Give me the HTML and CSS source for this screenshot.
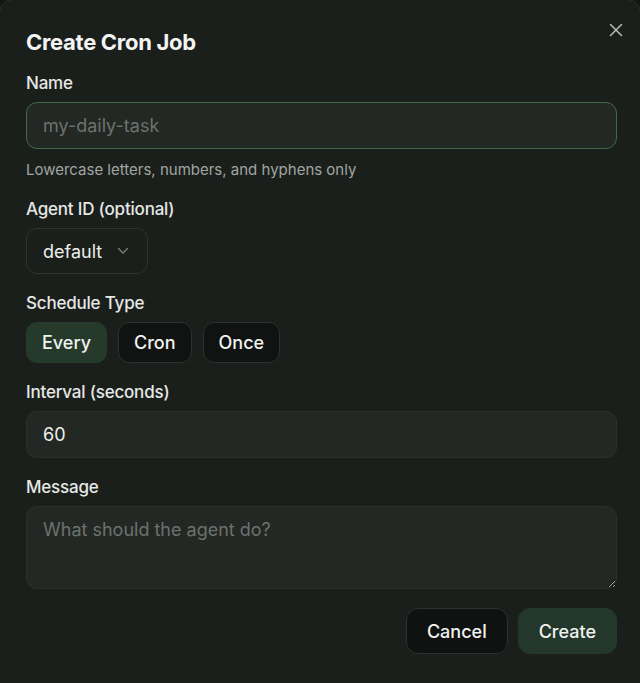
FILE: index.html
```html
<!DOCTYPE html>
<html lang="en">
  <head>
    <meta charset="UTF-8" />
    <meta name="viewport" content="width=device-width, initial-scale=1.0" />
    <title>Create Cron Job</title>
    <link rel="stylesheet" href="styles.css">
  </head>
  <body>
    <div class="dialog">
      <button type="button" class="close-btn" aria-label="Close">
        <svg width="14" height="14" viewBox="0 0 14 14" fill="none">
          <path d="M1.5 1.5 L12.5 12.5 M12.5 1.5 L1.5 12.5" stroke="currentColor" stroke-width="1.5" stroke-linecap="round" />
        </svg>
      </button>

      <h2 class="title">Create Cron Job</h2>

      <form class="form" id="cronForm">
        <div class="form-group">
          <label for="jobName">Name</label>
          <input type="text" id="jobName" class="field focused" placeholder="my-daily-task" />
          <div class="help-text">Lowercase letters, numbers, and hyphens only</div>
        </div>

        <div class="form-group">
          <label for="agentId">Agent ID (optional)</label>
          <button type="button" class="select" id="agentId">
            default
            <svg width="12" height="8" viewBox="0 0 12 8" fill="none">
              <path d="M1.5 1.5 L6 6 L10.5 1.5" stroke="currentColor" stroke-width="1.3" stroke-linecap="round" stroke-linejoin="round" />
            </svg>
          </button>
        </div>

        <div class="form-group">
          <label>Schedule Type</label>
          <div class="segmented">
            <button type="button" class="seg-btn active">Every</button>
            <button type="button" class="seg-btn">Cron</button>
            <button type="button" class="seg-btn">Once</button>
          </div>
        </div>

        <div class="form-group">
          <label for="interval">Interval (seconds)</label>
          <input type="text" id="interval" class="field" value="60" />
        </div>

        <div class="form-group">
          <label for="message">Message</label>
          <textarea id="message" class="field textarea" placeholder="What should the agent do?"></textarea>
        </div>

        <div class="actions">
          <button type="button" class="btn btn-secondary">Cancel</button>
          <button type="submit" class="btn btn-primary">Create</button>
        </div>
      </form>
    </div>
  </body>
</html>
```

FILE: styles.css
```css
* {
  box-sizing: border-box;
}

body {
  margin: 0;
  background-color: #141715;
  font-family: Inter, "Liberation Sans", sans-serif;
  color: #eceeec;
}

.dialog {
  position: relative;
  width: 642px;
  min-height: 700px;
  margin: -1px 0 0 -1px;
  padding: 26px 23px 0 26px;
  background-color: #1b1f1c;
  border: 1px solid #2a2f2b;
  border-radius: 14px;
}

.close-btn {
  position: absolute;
  top: 23px;
  right: 17px;
  padding: 0;
  background: none;
  border: none;
  color: #b9bdba;
  cursor: pointer;
}

.close-btn svg {
  display: block;
}

.title {
  margin: 0 0 14px;
  font-size: 22px;
  line-height: 32px;
  font-weight: 700;
  letter-spacing: -0.3px;
  color: #f3f5f3;
}

.form {
  display: flex;
  flex-direction: column;
  gap: 18px;
}

.form-group {
  display: flex;
  flex-direction: column;
  align-items: flex-start;
}

label {
  display: block;
  margin-bottom: 8px;
  font-size: 17px;
  line-height: 22px;
  font-weight: 500;
  letter-spacing: -0.2px;
  color: #e6e8e6;
}

.field {
  width: 100%;
  height: 47px;
  padding: 0 16px;
  background-color: #232825;
  border: 1px solid #2b302c;
  border-radius: 11px;
  font-family: inherit;
  font-size: 18px;
  color: #eef0ee;
  outline: none;
}

.field::placeholder {
  color: #6c726e;
}

.field.focused {
  border-color: #3f6a4a;
}

.textarea {
  height: 83px;
  padding: 11px 16px;
  line-height: 24px;
  resize: vertical;
}

.help-text {
  margin-top: 11px;
  font-size: 15px;
  line-height: 20px;
  color: #a0a5a1;
}

.select {
  display: flex;
  align-items: center;
  gap: 15px;
  height: 46px;
  padding: 0 18px 0 16px;
  background-color: #1b1f1c;
  border: 1px solid #2e332f;
  border-radius: 11px;
  font-family: inherit;
  font-size: 18px;
  color: #eceeec;
  cursor: pointer;
}

.select svg {
  color: #7b817d;
}

.segmented {
  display: flex;
  gap: 11px;
}

.seg-btn {
  height: 41px;
  padding: 0 15px;
  background-color: #101311;
  border: 1px solid #2d322e;
  border-radius: 11px;
  font-family: inherit;
  font-size: 18px;
  font-weight: 500;
  color: #f0f2f0;
  cursor: pointer;
}

.seg-btn.active {
  background-color: #263a2b;
  border-color: #263a2b;
}

.actions {
  display: flex;
  justify-content: flex-end;
  gap: 10px;
  margin-top: 1px;
}

.btn {
  height: 46px;
  padding: 0 20px;
  border-radius: 12px;
  font-family: inherit;
  font-size: 18px;
  font-weight: 500;
  color: #f0f2f0;
  cursor: pointer;
}

.btn-secondary {
  background-color: #0f1210;
  border: 1px solid #2c312d;
}

.btn-primary {
  background-color: #23382a;
  border: 1px solid #23382a;
}
```
